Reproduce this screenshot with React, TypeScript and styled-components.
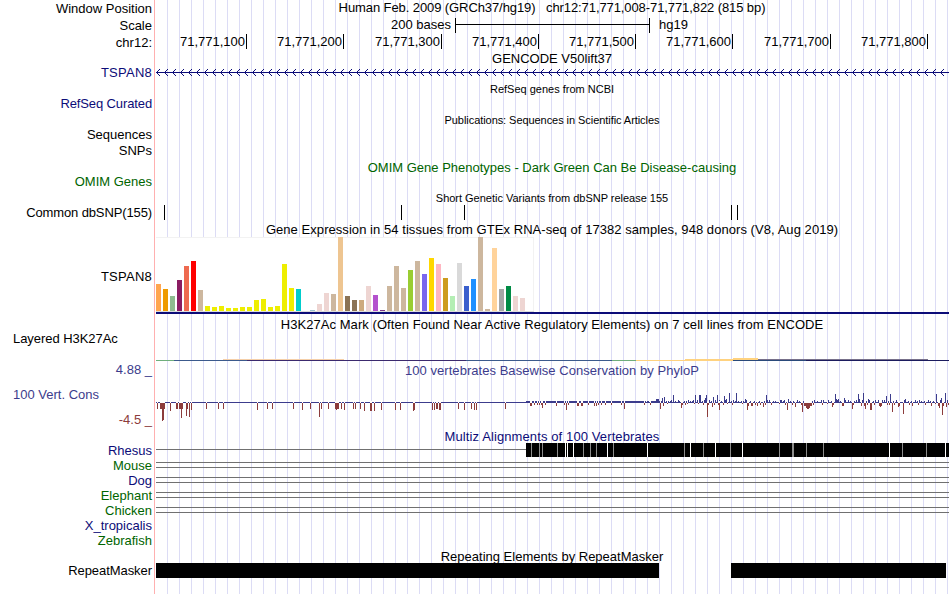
import styled, { createGlobalStyle } from "styled-components";

const GlobalStyle = createGlobalStyle`
  body {
    margin: 0;
    background: #fff;
    overflow: hidden;
  }
`;

const Browser = styled.main`
  width: 949px;
  height: 594px;
  display: grid;
  grid-template-columns: 152px 793px;
  column-gap: 4px;
  font-family: "Liberation Sans", Arial, sans-serif;
  font-size: 13px;
  line-height: 15px;
  white-space: pre;
  color: #000;
  background:
    linear-gradient(#ffb0b0, #ffb0b0) 154px 0 / 1px 100% no-repeat,
    repeating-linear-gradient(to right, #dcdcf5 0 1px, transparent 1px 12px)
      167px 0 / 782px 100% no-repeat;
`;

const Column = styled.div`
  display: flex;
  flex-direction: column;
  min-width: 0;
`;

const Label = styled.div<{
  $gap?: number;
  $color?: string;
  $left?: boolean;
  $spacing?: number;
}>`
  flex: none;
  height: 15px;
  margin-top: ${({ $gap = 0 }) => $gap}px;
  padding-left: 13px;
  letter-spacing: ${({ $spacing = 0 }) => $spacing}px;
  text-align: ${({ $left }) => ($left ? "left" : "right")};
  color: ${({ $color = "#000" }) => $color};
`;

const Title = styled.div<{
  $gap?: number;
  $color?: string;
  $small?: boolean;
  $spacing?: number;
}>`
  flex: none;
  height: ${({ $small }) => ($small ? 12 : 15)}px;
  margin-top: ${({ $gap = 0 }) => $gap}px;
  padding-right: 1px;
  font-size: ${({ $small }) => ($small ? 11 : 13)}px;
  line-height: ${({ $small }) => ($small ? 12 : 15)}px;
  letter-spacing: ${({ $spacing = 0 }) => $spacing}px;
  text-align: center;
  color: ${({ $color = "#000" }) => $color};
`;

const ScaleRow = styled.div`
  flex: none;
  display: grid;
  grid-template-columns: 295px 195px auto;
  column-gap: 4px;
  height: 15px;
  margin-top: 2px;
`;

const ScaleText = styled.span<{ $end?: boolean }>`
  padding-left: ${({ $end }) => ($end ? 0 : 5)}px;
  text-align: ${({ $end }) => ($end ? "right" : "left")};
`;

const ScaleBar = styled.div`
  display: flex;
  align-items: center;
  box-sizing: border-box;
  height: 15px;
  margin-top: 1px;
  border: solid #000;
  border-width: 0 1px;

  &::before {
    content: "";
    flex: 1;
    height: 1px;
    margin-top: -2px;
    background: #000;
  }
`;

const Ruler = styled.div`
  flex: none;
  display: flex;
  height: 15px;
  margin-top: 2px;
`;

const Tick = styled.div<{ $width: number }>`
  box-sizing: border-box;
  flex: none;
  width: ${({ $width }) => $width}px;
  padding-right: 1px;
  border-right: 1px solid #000;
  text-align: right;
`;

const Plot = styled.svg<{ $gap?: number }>`
  flex: none;
  display: block;
  width: 793px;
  margin-top: ${({ $gap = 0 }) => $gap}px;
  shape-rendering: crispEdges;
`;

const NAVY = "#0c0c78";
const GREEN = "#006400";
const BLUE = "#3c3c8c";
const RED = "#8c3c3c";

// x of the left edge of the data area
const X0 = 156;

const ruler: [string, number][] = [
  ["71,771,100", 91],
  ["71,771,200", 97],
  ["71,771,300", 98],
  ["71,771,400", 97],
  ["71,771,500", 97],
  ["71,771,600", 97],
  ["71,771,700", 98],
  ["71,771,800", 97],
];

const snps = [164, 401, 464, 731, 737];

const tissues: [number, string][] = [
  [27, "#ffa54f"], [22, "#ee9a00"], [15, "#8fbc8f"], [31, "#8b1c62"],
  [45, "#ee6a50"], [50, "#ff0000"], [21, "#cdb79e"], [5, "#eeee00"],
  [4, "#eeee00"], [5, "#eeee00"], [3, "#eeee00"], [3, "#eeee00"],
  [4, "#eeee00"], [4, "#eeee00"], [11, "#eeee00"], [12, "#eeee00"],
  [4, "#eeee00"], [5, "#eeee00"], [47, "#eeee00"], [23, "#eeee00"],
  [22, "#00cdcd"], [0, "#ee82ee"], [1, "#9ac0cd"], [7, "#eed5d2"],
  [18, "#eed5d2"], [17, "#cdb79e"], [74, "#eec591"], [15, "#8b7355"],
  [11, "#8b7355"], [11, "#cdaa7d"], [25, "#eed5d2"], [16, "#b452cd"],
  [1, "#7a378b"], [25, "#cdb79e"], [45, "#cdb79e"], [23, "#cdb79e"],
  [41, "#9acd32"], [50, "#cdb79e"], [37, "#7a67ee"], [53, "#ffd700"],
  [47, "#ffb6c1"], [33, "#cd9b1d"], [15, "#b4eeb4"], [48, "#d9d9d9"],
  [25, "#3a5fcd"], [32, "#1e90ff"], [74, "#cdb79e"], [2, "#cdb79e"],
  [63, "#ffd39b"], [22, "#a6a6a6"], [25, "#008b45"], [15, "#eed5d2"],
  [13, "#eed5d2"], [0, "#ff00ff"],
];

// [x, y, width, height, colour]
const acetylation: [number, number, number, number, string][] = [
  [156, 360, 18, 1, "#6fae7c"],
  [174, 360, 73, 1, "#3c5a8c"],
  [247, 360, 219, 1, "#3c2a6e"],
  [466, 360, 146, 1, "#3c5a8c"],
  [612, 360, 24, 1, "#6fae7c"],
  [636, 360, 97, 1, "#ffd27f"],
  [223, 359, 121, 1, "#f5cfa8"],
  [685, 359, 48, 1, "#ffd27f"],
  [733, 358, 25, 2, "#ffd27f"],
  [733, 360, 73, 1, "#2a4a7a"],
  [806, 360, 143, 1, "#1c1c5e"],
  [758, 359, 170, 1, "#77708a"],
];

// [x, bar height]
const consUp: [number, number][] = [
  [645, 2], [647, 2], [648, 2], [651, 2], [652, 2], [653, 2], [654, 2],
  [655, 2], [656, 4], [657, 4], [658, 4], [659, 2], [661, 2], [662, 5],
  [664, 6], [666, 2], [668, 2], [670, 2], [671, 3], [673, 8], [675, 2],
  [678, 3], [679, 2], [684, 2], [686, 2], [688, 3], [690, 2], [692, 2],
  [693, 3], [695, 8], [697, 3], [699, 8], [700, 8], [702, 2], [704, 3],
  [705, 5], [706, 8], [709, 3], [711, 2], [713, 6], [715, 3], [717, 8],
  [719, 3], [721, 2], [724, 7], [725, 3], [726, 4], [729, 10], [731, 2],
  [733, 3], [735, 2], [736, 10], [738, 2], [741, 2], [743, 2], [745, 4],
  [746, 3], [750, 2], [754, 2], [759, 2], [764, 2], [766, 8], [767, 3],
  [769, 3], [773, 2], [775, 2], [780, 3], [781, 3], [783, 2], [784, 3],
  [788, 4], [790, 2], [793, 2], [797, 3], [799, 2], [803, 2], [812, 2],
  [814, 3], [817, 2], [821, 3], [823, 3], [828, 3], [831, 2], [835, 9],
  [836, 4], [837, 3], [838, 4], [840, 2], [844, 5], [845, 3], [848, 3],
  [850, 2], [854, 2], [856, 3], [858, 9], [859, 4], [862, 3], [863, 10],
  [866, 2], [868, 4], [869, 3], [873, 2], [875, 3], [878, 3], [882, 3],
  [884, 3], [886, 7], [888, 2], [890, 9], [893, 2], [896, 3], [904, 3],
  [905, 4], [908, 2], [911, 2], [915, 3], [917, 2], [919, 3], [921, 2],
  [924, 2], [928, 3], [930, 2], [933, 2], [936, 9], [940, 3], [941, 5],
  [945, 10], [947, 3],
];

const consDown: [number, number][] = [
  [157, 6], [160, 6], [161, 6], [162, 18], [163, 17], [164, 6], [170, 8],
  [176, 6], [177, 6], [179, 6], [180, 6], [181, 15], [182, 6], [186, 13],
  [187, 6], [189, 14], [191, 7], [206, 6], [218, 6], [223, 6], [257, 7],
  [267, 6], [272, 6], [293, 6], [302, 7], [310, 6], [319, 14], [321, 6],
  [328, 6], [335, 6], [336, 7], [337, 6], [338, 6], [341, 6], [344, 7],
  [353, 6], [355, 6], [360, 6], [364, 8], [370, 8], [371, 8], [374, 8],
  [381, 7], [395, 7], [400, 7], [413, 8], [414, 7], [432, 7], [434, 7],
  [436, 6], [437, 6], [439, 7], [440, 7], [458, 6], [464, 7], [471, 6],
  [474, 7], [476, 7], [505, 6], [530, 3], [531, 3], [534, 2], [537, 2],
  [539, 2], [541, 2], [542, 5], [545, 2], [556, 3], [564, 2], [566, 7],
  [568, 2], [577, 3], [578, 3], [581, 3], [582, 3], [588, 2], [594, 3],
  [596, 3], [598, 2], [601, 2], [605, 2], [611, 2], [621, 2], [624, 6],
  [644, 2], [650, 2], [660, 6], [663, 3], [667, 1], [681, 5], [682, 2],
  [685, 2], [687, 1], [694, 1], [698, 1], [703, 2], [707, 14], [708, 2],
  [712, 4], [714, 2], [718, 2], [719, 7], [723, 2], [727, 1], [732, 2],
  [742, 1], [747, 7], [748, 3], [751, 3], [752, 3], [755, 2], [757, 3],
  [760, 2], [763, 4], [765, 2], [771, 2], [779, 1], [785, 2], [787, 7],
  [792, 2], [795, 4], [801, 2], [802, 9], [804, 3], [805, 3], [806, 5],
  [807, 6], [808, 6], [809, 5], [810, 3], [811, 3], [813, 2], [822, 2],
  [827, 1], [832, 4], [833, 2], [842, 3], [843, 3], [852, 6], [853, 2],
  [861, 3], [864, 3], [865, 6], [867, 2], [870, 7], [871, 7], [874, 2],
  [879, 3], [880, 4], [881, 3], [887, 2], [889, 2], [892, 9], [894, 2],
  [898, 4], [899, 3], [903, 11], [909, 2], [912, 3], [918, 2], [925, 2],
  [931, 3], [935, 1], [938, 3], [939, 5], [942, 12], [943, 3], [946, 4],
  [948, 2],
];

const rhesusMismatch = [
  531, 539, 542, 557, 583, 590, 596, 613, 684, 703, 730, 779, 792, 793, 806,
  823, 902, 926,
];
const rhesusGap = [565, 567, 573, 607, 647, 690, 715, 742, 889, 945];

const alignmentLines = [462, 467, 477, 482, 492, 497, 507, 512];

// left-pointing strand chevron, one pixel per row, tip at (x, 72)
const chevron = (x: number) =>
  [-3, -2, -1, 1, 2, 3]
    .map((dy) => `M${x + Math.abs(dy)} ${72 + dy}h1v1h-1z`)
    .join("");

const arrows = Array.from({ length: 99 }, (_, i) => chevron(156 + i * 8)).join("");

export default function App() {
  return (
    <>
      <GlobalStyle />
      <Browser>
        <Column>
          <Label $gap={1}>Window Position</Label>
          <Label $gap={2}>Scale</Label>
          <Label $gap={2}>chr12:</Label>
          <Label $gap={15} $color={NAVY} $spacing={0.25}>TSPAN8</Label>
          <Label $gap={16} $color={NAVY} $spacing={-0.12}>RefSeq Curated</Label>
          <Label $gap={16}>Sequences</Label>
          <Label $gap={1}>SNPs</Label>
          <Label $gap={16} $color={GREEN}>OMIM Genes</Label>
          <Label $gap={16} $spacing={-0.12}>Common dbSNP(155)</Label>
          <Label $gap={49} $spacing={0.25}>TSPAN8</Label>
          <Label $gap={47} $left $spacing={-0.05}>Layered H3K27Ac</Label>
          <Label $gap={16} $color={BLUE}>4.88 _</Label>
          <Label $gap={10} $color={BLUE} $left>100 Vert. Cons</Label>
          <Label $gap={10} $color={RED}>-4.5 _</Label>
          <Label $gap={16} $color={NAVY}>Rhesus</Label>
          <Label $color={GREEN}>Mouse</Label>
          <Label $color={NAVY}>Dog</Label>
          <Label $color={GREEN}>Elephant</Label>
          <Label $color={GREEN}>Chicken</Label>
          <Label $color={NAVY}>X_tropicalis</Label>
          <Label $color={GREEN}>Zebrafish</Label>
          <Label $gap={15} $spacing={-0.06}>RepeatMasker</Label>
        </Column>

        <Column>
          <Title $spacing={-0.09}>
            {"Human Feb. 2009 (GRCh37/hg19)   chr12:71,771,008-71,771,822 (815 bp)"}
          </Title>
          <ScaleRow>
            <ScaleText $end>200 bases</ScaleText>
            <ScaleBar />
            <ScaleText>hg19</ScaleText>
          </ScaleRow>
          <Ruler>
            {ruler.map(([text, width]) => (
              <Tick key={text} $width={width}>{text}</Tick>
            ))}
          </Ruler>

          <Title $gap={2}>GENCODE V50lift37</Title>
          <Plot $gap={2} height={9} viewBox={`${X0} 68 793 9`}>
            <rect x={156} y={72} width={793} height={1} fill={NAVY} />
            <path d={arrows} fill={NAVY} />
          </Plot>

          <Title $gap={6} $small>RefSeq genes from NCBI</Title>
          <Title $gap={19} $small $spacing={-0.06}>
            Publications: Sequences in Scientific Articles
          </Title>
          <Title $gap={34} $color={GREEN}>
            OMIM Gene Phenotypes - Dark Green Can Be Disease-causing
          </Title>

          <Title $gap={17} $small $spacing={-0.02}>
            Short Genetic Variants from dbSNP release 155
          </Title>
          <Plot $gap={1} height={15} viewBox={`${X0} 205 793 15`}>
            {snps.map((x) => (
              <rect key={x} x={x} y={205} width={1} height={15} />
            ))}
          </Plot>

          <Title $gap={2} $spacing={0.055}>
            Gene Expression in 54 tissues from GTEx RNA-seq of 17382 samples, 948 donors (V8, Aug 2019)
          </Title>
          <Plot height={77} viewBox={`${X0} 237 793 77`}>
            <rect x={156} y={237} width={378} height={75} fill="#f2f2f2" />
            <rect x={156} y={238} width={377} height={73} fill="#fff" />
            <rect x={156} y={311} width={378} height={1} fill="#dcdcdc" />
            {tissues.map(([height, fill], i) => (
              <rect
                key={i}
                x={X0 + i * 7}
                y={311 - height}
                width={5}
                height={height}
                fill={fill}
              />
            ))}
            <rect x={156} y={312} width={793} height={2} fill={NAVY} />
          </Plot>

          <Title $gap={3} $spacing={0.058}>
            H3K27Ac Mark (Often Found Near Active Regulatory Elements) on 7 cell lines from ENCODE
          </Title>
          <Plot $gap={26} height={3} viewBox={`${X0} 358 793 3`}>
            {acetylation.map(([x, y, width, height, fill]) => (
              <rect key={`${x}-${y}`} {...{ x, y, width, height, fill }} />
            ))}
          </Plot>

          <Title $gap={2} $color={BLUE} $spacing={0.04}>
            100 vertebrates Basewise Conservation by PhyloP
          </Title>
          <Plot $gap={12} height={36} viewBox={`${X0} 390 793 36`}>
            <rect x={156} y={402} width={793} height={1} fill={BLUE} />
            <rect x={526} y={401} width={118} height={2} fill={BLUE} />
            {consUp.map(([x, h]) => (
              <rect key={x} x={x} y={403 - h} width={1} height={h} fill={BLUE} />
            ))}
            {/* the zero line breaks wherever the score is negative */}
            {consDown.map(([x, h]) => (
              <g key={x}>
                <rect x={x} y={401} width={1} height={2} fill="#fff" />
                <rect x={x} y={403} width={1} height={h} fill={RED} />
              </g>
            ))}
          </Plot>

          <Title $gap={3} $color={NAVY} $spacing={0.11}>
            Multiz Alignments of 100 Vertebrates
          </Title>
          <Plot $gap={-1} height={70} viewBox={`${X0} 443 793 70`}>
            <rect x={156} y={449} width={370} height={1} fill="#707070" />
            <rect x={526} y={443} width={423} height={14} />
            {rhesusMismatch.map((x) => (
              <rect key={x} x={x} y={443} width={1} height={14} fill="#8c8c8c" />
            ))}
            {rhesusGap.map((x) => (
              <rect key={x} x={x} y={443} width={1} height={14} fill="#fff" />
            ))}
            {alignmentLines.map((y) => (
              <rect key={y} x={156} y={y} width={793} height={1} fill="#707070" />
            ))}
          </Plot>

          <Title $gap={36}>Repeating Elements by RepeatMasker</Title>
          <Plot $gap={-1} height={15} viewBox={`${X0} 563 793 15`}>
            <rect x={156} y={563} width={503} height={15} />
            <rect x={731} y={563} width={215} height={15} />
          </Plot>
        </Column>
      </Browser>
    </>
  );
}
